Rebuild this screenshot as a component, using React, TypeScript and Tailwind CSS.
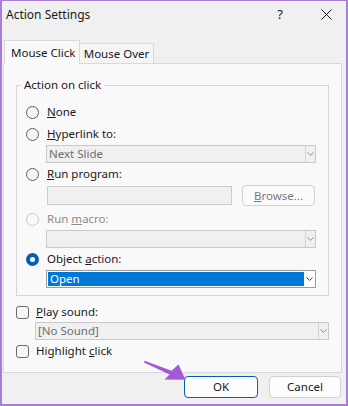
import React from "react";

function Radio({ checked, disabled }: { checked?: boolean; disabled?: boolean }) {
  if (checked) {
    return (
      <span className="w-[13px] h-[13px] shrink-0 rounded-full bg-[#005fb8] flex items-center justify-center">
        <span className="w-[5px] h-[5px] rounded-full bg-white" />
      </span>
    );
  }
  return (
    <span
      className={
        disabled
          ? "w-[13px] h-[13px] shrink-0 rounded-full border border-[#c8c8c8] bg-[#f9f9f9]"
          : "w-[13px] h-[13px] shrink-0 rounded-full border border-[#5f5f5f] bg-[#f6f6f6]"
      }
    />
  );
}

function Check() {
  return <span className="w-[13px] h-[13px] shrink-0 rounded-[3px] border border-[#6b6b6b] bg-[#f6f6f6]" />;
}

function Chevron({ dark }: { dark?: boolean }) {
  return (
    <svg width="7" height="4" viewBox="0 0 7 4">
      <path d="M0.5 0.5 L3.5 3.3 L6.5 0.5" fill="none" stroke={dark ? "#3a3a3a" : "#8a8a8a"} strokeWidth="1" />
    </svg>
  );
}

function Combo({ text, className }: { text?: string; className: string }) {
  return (
    <div className={"h-[18px] border border-[#c9c9c9] bg-[#f0f0f0] flex " + className}>
      <div className="flex-1 flex items-center pl-[2px] text-[#6e6e6e] leading-none">{text}</div>
      <div className="w-[10px] border-l border-[#d4d4d4] flex items-center justify-center">
        <Chevron />
      </div>
    </div>
  );
}

export default function App() {
  return (
    <div className="relative w-[348px] h-[406px] bg-[#f0f0f0] border-x-2 border-b-2 border-t border-[#a77dd6] flex flex-col font-['Noto_Sans',sans-serif] text-[11.5px] text-[#1a1a1a] overflow-hidden">
      {/* Title bar */}
      <div className="h-[27px] flex items-center pl-[4px] shrink-0 text-[12px]">
        <span className="flex-1">Action Settings</span>
        <span className="text-[13px] mr-[38px]">?</span>
        <svg width="11" height="11" viewBox="0 0 11 11" className="mr-[14px]">
          <path d="M0.5 0.5 L10.5 10.5 M10.5 0.5 L0.5 10.5" stroke="#1a1a1a" strokeWidth="1" />
        </svg>
      </div>

      {/* Tabs */}
      <div className="mt-[12px] ml-[2px] flex items-end h-[23px] shrink-0">
        <div className="relative z-10 h-[24px] -mb-px w-[76px] bg-[#f9f9f9] border-x border-t border-[#d9d9d9] flex items-start pt-[3px] pl-[6px]">
          Mouse Click
        </div>
        <div className="h-[20px] w-[74px] bg-[#f5f5f5] border-r border-t border-[#d9d9d9] flex items-center justify-center pt-[1px]">
          Mouse Over
        </div>
      </div>

      {/* Panel */}
      <div className="ml-[1px] w-[339px] h-[310px] shrink-0 border border-[#d9d9d9] bg-[#f9f9f9] pt-[13px] pl-[12px]">
        <fieldset className="w-[313px] border border-[#d6d6d6] pb-[7px]">
          <legend className="ml-[4px] px-[3px] leading-[16px]">Action on click</legend>
          <div className="pl-[9px] flex flex-col">
            <div className="mt-[9px] h-[20px] flex items-center gap-[8px]">
              <Radio />
              <span>
                <span className="underline">N</span>one
              </span>
            </div>
            <div className="mt-[2px] h-[20px] flex items-center gap-[8px]">
              <Radio />
              <span>
                <span className="underline">H</span>yperlink to:
              </span>
            </div>
            <Combo text="Next Slide" className="mt-[1px] ml-[20px] w-[270px]" />
            <div className="mt-[1px] h-[20px] flex items-center gap-[8px]">
              <Radio />
              <span>
                <span className="underline">R</span>un program:
              </span>
            </div>
            <div className="mt-[1px] h-[21px] flex items-center ml-[21px]">
              <div className="w-[185px] h-[19px] border border-[#cccccc] bg-[#f0f0f0]" />
              <div className="ml-[10px] w-[73px] h-[21px] rounded-[4px] border border-[#d1d1d1] bg-[#fbfbfb] flex items-center justify-center text-[#7a7a7a]">
                <span>
                  <span className="underline">B</span>rowse...
                </span>
              </div>
            </div>
            <div className="mt-[3px] h-[20px] flex items-center gap-[8px] text-[#8b8b8b]">
              <Radio disabled />
              <span>
                Run <span className="underline">m</span>acro:
              </span>
            </div>
            <Combo className="mt-[1px] ml-[20px] w-[270px]" />
            <div className="mt-[1px] h-[20px] flex items-center gap-[8px]">
              <Radio checked />
              <span>
                Object <span className="underline">a</span>ction:
              </span>
            </div>
            <div className="mt-[1px] ml-[20px] w-[270px] h-[18px] border border-[#9c9c9c] bg-white flex p-px">
              <div className="flex-1 bg-[#0078d7] text-white flex items-center pl-[2px] leading-none">Open</div>
              <div className="w-[10px] flex items-center justify-center">
                <Chevron dark />
              </div>
            </div>
          </div>
        </fieldset>

        <div className="mt-[6px] h-[20px] flex items-center gap-[7px]">
          <Check />
          <span>
            <span className="underline">P</span>lay sound:
          </span>
        </div>
        <Combo text="[No Sound]" className="ml-[19px] w-[294px]" />
        <div className="mt-[1px] h-[20px] flex items-center gap-[7px]">
          <Check />
          <span>
            Highlight <span className="underline">c</span>lick
          </span>
        </div>
      </div>

      {/* Buttons */}
      <div className="mt-[3px] flex justify-end gap-[11px] pr-[5px] shrink-0">
        <div className="w-[74px] h-[22px] rounded-[4px] border border-[#005fb8] bg-[#fdfdfd] flex items-center justify-center">OK</div>
        <div className="w-[72px] h-[22px] rounded-[4px] border border-[#d0d0d0] bg-[#fdfdfd] flex items-center justify-center">Cancel</div>
      </div>

      {/* Purple annotation arrow */}
      <svg className="absolute left-0 top-0 pointer-events-none" width="348" height="406" viewBox="0 0 348 406">
        <polygon
          points="142.6,359.8 169.5,369.8 176.5,363.5 183.5,378.8 162.5,378.5 167.6,373.6 142,361.6"
          fill="#a05ad8"
        />
      </svg>
    </div>
  );
}
